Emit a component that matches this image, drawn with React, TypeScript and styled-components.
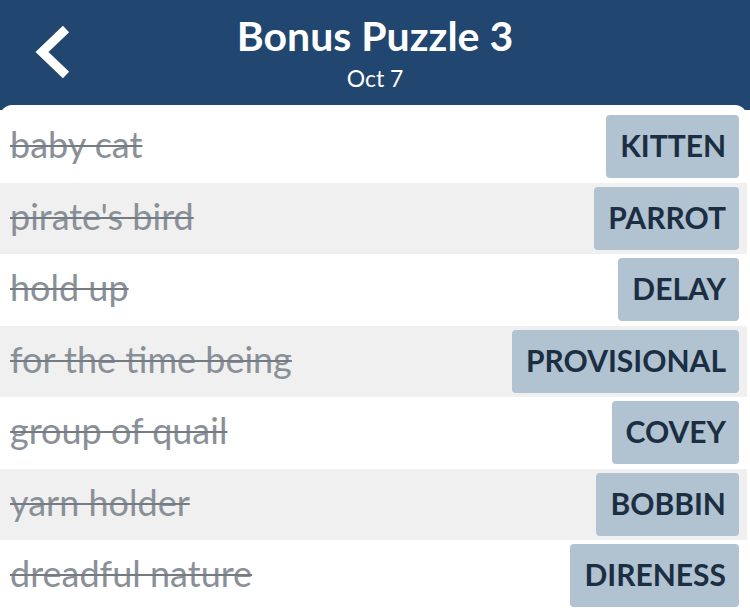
import styled, { createGlobalStyle } from 'styled-components'

const GlobalStyle = createGlobalStyle`
  html, body {
    margin: 0;
    padding: 0;
    background: #ffffff;
  }
  body {
    font-family: Lato, 'Noto Sans', sans-serif;
  }
`

const clues = [
  { clue: 'baby cat', answer: 'KITTEN' },
  { clue: "pirate's bird", answer: 'PARROT' },
  { clue: 'hold up', answer: 'DELAY' },
  { clue: 'for the time being', answer: 'PROVISIONAL' },
  { clue: 'group of quail', answer: 'COVEY' },
  { clue: 'yarn holder', answer: 'BOBBIN' },
  { clue: 'dreadful nature', answer: 'DIRENESS' },
]

export default function App() {
  return (
    <>
      <GlobalStyle />
      <Screen>
        <Header>
          <BackButton aria-label="Back">
            <svg width="40" height="54" viewBox="0 0 40 54">
              <polyline
                points="33,4 9,27 33,50"
                fill="none"
                stroke="#ffffff"
                strokeWidth="9"
                strokeLinejoin="miter"
              />
            </svg>
          </BackButton>
          <Title>Bonus Puzzle 3</Title>
          <Subtitle>Oct 7</Subtitle>
        </Header>
        <Panel>
          {clues.map((item, i) => (
            <Row key={item.answer} $shaded={i % 2 === 1}>
              <Clue>{item.clue}</Clue>
              <Answer>{item.answer}</Answer>
            </Row>
          ))}
        </Panel>
      </Screen>
    </>
  )
}

const Screen = styled.div`
  width: 750px;
  height: 611px;
  overflow: hidden;
`

const Header = styled.header`
  position: relative;
  height: 110px;
  background: #21466f;
  display: flex;
  flex-direction: column;
  align-items: center;
  padding-top: 12px;
  box-sizing: border-box;
`

const BackButton = styled.button`
  position: absolute;
  left: 33px;
  top: 25px;
  padding: 0;
  border: 0;
  background: none;
  display: flex;
`

const Title = styled.h1`
  margin: 0;
  color: #ffffff;
  font-size: 41px;
  font-weight: 700;
  line-height: 48px;
`

const Subtitle = styled.div`
  margin-top: 4px;
  color: #ffffff;
  font-size: 23px;
  line-height: 28px;
`

const Panel = styled.main`
  margin-top: -5px;
  margin-right: 3px;
  padding-top: 6px;
  background: #ffffff;
  border-radius: 12px 12px 0 0;
  position: relative;
`

const Row = styled.div<{ $shaded: boolean }>`
  height: 71.5px;
  display: flex;
  align-items: center;
  justify-content: space-between;
  padding: 0 8px 0 10px;
  box-sizing: border-box;
  background: ${(p) => (p.$shaded ? '#f0f0f0' : '#ffffff')};
`

const Clue = styled.span`
  margin-bottom: 5px;
  color: #8a9098;
  font-size: 36px;
  text-decoration: line-through;
  text-decoration-color: #757b83;
  text-decoration-thickness: 2px;
`

const Answer = styled.span`
  height: 63px;
  display: flex;
  align-items: center;
  padding: 0 13px 3px 14px;
  box-sizing: border-box;
  background: #b1c2d0;
  border-radius: 4px;
  color: #1b2e42;
  font-size: 30px;
  font-weight: 700;
`
